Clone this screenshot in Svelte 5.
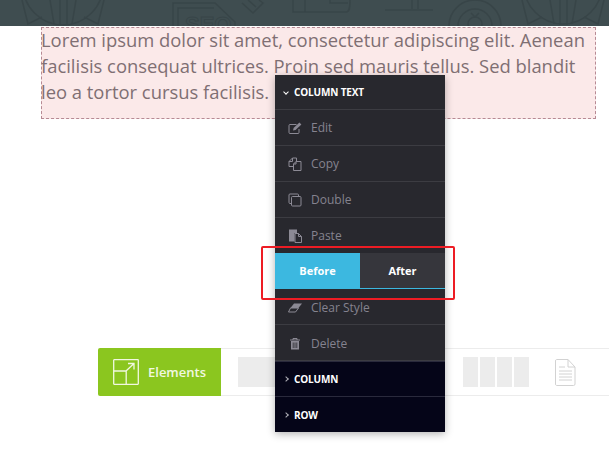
<script>
  const actions = [
    { label: 'Edit', icon: 'edit' },
    { label: 'Copy', icon: 'copy' },
    { label: 'Double', icon: 'double' },
    { label: 'Paste', icon: 'paste' }
  ];
  const tailActions = [
    { label: 'Clear Style', icon: 'eraser' },
    { label: 'Delete', icon: 'trash' }
  ];
  let position = $state('before');
</script>

{#snippet icon(name)}
  <svg class="row-icon" viewBox="0 0 14 14" width="14" height="14" fill="none" stroke="currentColor" stroke-width="1">
    {#if name === 'edit'}
      <path d="M11 8v3.500a1 1 0 0 1-1 1H2a1 1 0 0 1-1-1v-7a1 1 0 0 1 1-1h6.500" />
      <path d="M5 9.500l.6-2.500L11.400 1.500l2 2L7.500 9z" fill="currentColor" stroke="none" />
    {:else if name === 'copy'}
      <path d="M4.500 1h4v3.500M4.500 1L1 4.500v5h4.500" />
      <path d="M4.500 1v3.500H1" />
      <path d="M8 4.500h5v9H5.500V7z" />
      <path d="M8 4.500V7H5.500" />
    {:else if name === 'double'}
      <path d="M3.500 10.500H2a1 1 0 0 1-1-1V2a1 1 0 0 1 1-1h7.500a1 1 0 0 1 1 1v1.500" />
      <rect x="3.500" y="3.500" width="9.500" height="9.500" rx="1" />
    {:else if name === 'paste'}
      <path d="M1 .5h8v3.500H6.500v8.500H1z" fill="currentColor" stroke="none" />
      <path d="M7 4.500h3.500l3 3V13.500H7z" />
      <path d="M10.500 4.500v3h3" />
    {:else if name === 'eraser'}
      <path d="M6 2.500h8L10.500 7H2.500z" fill="currentColor" stroke="none" />
      <path d="M2.500 7h8L7.500 11H.5z" />
    {:else}
      <path d="M2 3h10M5 3V1.500h4V3" />
      <path d="M3 4h8v8.500H3z" fill="currentColor" stroke="none" />
      <path d="M5.200 5.500v5.500M7 5.500v5.500M8.800 5.500v5.500" stroke="#28282e" stroke-width=".8" />
    {/if}
  </svg>
{/snippet}

<header class="banner">
  <!-- faint outline pattern -->
  <svg class="pattern" width="609" height="26" viewBox="0 0 609 26" fill="none" stroke="#384548" stroke-width="1.500">
    <!-- left badge -->
    <circle cx="63" cy="-15" r="40" />
    <path d="M22 0l6 24 14-7M104 0l-6 24-14-7M50 0l4 24M76 0l-4 24M60 0v25M67 0v25" />
    <!-- seo tag -->
    <path d="M173 26V3h42l20 19v4M178 26V8h36" />
    <text x="185" y="32" class="seo">SEO</text>
    <path d="M242 3l11 10 10-10-4-3M248 0l8 7" />
    <!-- bars -->
    <path d="M293 0v12h12V0M305 12h41c4 0 4-6 4-12M330 0v3h18" />
    <path d="M385 10h48M412 0v9M418 0v9" />
    <!-- gear -->
    <circle cx="475" cy="26" r="26" />
    <circle cx="475" cy="26" r="17" />
    <circle cx="475" cy="24" r="7" />
    <path d="M471 13l4 4 4-4" />
    <!-- right badge -->
    <circle cx="563" cy="-15" r="39" />
    <path d="M522 0l6 24 14-7M604 0l-6 24-14-7M550 0l4 24M576 0l-4 24M560 0v25M567 0v25" />
  </svg>
</header>

<main class="canvas">
  <section class="selected">
    <p>Lorem ipsum dolor sit amet, consectetur adipiscing elit. Aenean facilisis consequat ultrices. Proin sed mauris tellus. Sed blandit leo a tortor cursus facilisis.</p>
  </section>

  <div class="toolbar">
    <button class="elements">
      <svg viewBox="0 0 26 26" width="26" height="26" fill="none" stroke="currentColor" stroke-width="1.300">
        <rect x=".7" y=".7" width="24.600" height="24.600" rx=".5" />
        <path d="M.7 12h12.500v13.300M13 12L21 4.500M15 4.500h6v6" />
      </svg>
      <span>Elements</span>
    </button>
    <div class="blocks">
      <div class="block wide"></div>
      <div class="quad">
        <div class="block"></div>
        <div class="block"></div>
        <div class="block"></div>
        <div class="block"></div>
      </div>
      <svg class="doc" viewBox="0 0 21 27" width="21" height="27" fill="none" stroke="#d2d2d2" stroke-width="1">
        <path d="M1.500.5h11.500l7 7.500v17a1.500 1.500 0 0 1-1.500 1.500h-17A1.500 1.500 0 0 1 .5 25V2A1.500 1.500 0 0 1 1.500.5z" />
        <path d="M13 .5V8h7M4 8h6M4 12h13M4 15h13M4 18h13M4 21h13" />
      </svg>
    </div>
  </div>
</main>

<aside class="menu">
  <div class="head"><span class="chev down"></span>COLUMN TEXT</div>
  {#each actions as a}
    <div class="row">{@render icon(a.icon)}<span>{a.label}</span></div>
  {/each}
  <div class="switch">
    <button class:active={position === 'before'} onclick={() => (position = 'before')}>Before</button>
    <button class:active={position === 'after'} onclick={() => (position = 'after')}>After</button>
  </div>
  {#each tailActions as a}
    <div class="row tail">{@render icon(a.icon)}<span>{a.label}</span></div>
  {/each}
  <div class="dark"><span class="chev"></span>COLUMN</div>
  <div class="dark last"><span class="chev"></span>ROW</div>
</aside>

<div class="highlight"></div>

<style>
  :global(body) {
    margin: 0;
    background: #fff;
    font-family: "Open Sans", "Noto Sans", sans-serif;
    overflow: hidden;
  }

  .banner {
    height: 26px;
    background: #3f4d50;
    overflow: hidden;
  }

  .pattern {
    display: block;
  }

  .seo {
    font-family: "Liberation Sans", sans-serif;
    font-size: 22px;
    font-weight: 700;
    fill: none;
    stroke: #384548;
    stroke-width: 1;
  }

  .canvas {
    padding: 1px 13px 0 41px;
  }

  .selected {
    height: 90px;
    background: #fbe9e9;
    border: 1px dashed #b78a94;
  }

  .selected p {
    margin: -1px 0 0 -1px;
    font-family: "Open Sans", sans-serif;
    font-size: 18.400px;
    line-height: 26px;
    color: #7f6f73;
  }

  .toolbar {
    display: flex;
    margin: 229px -13px 0 57px;
    height: 48px;
  }

  .elements {
    width: 123px;
    height: 48px;
    display: flex;
    align-items: center;
    gap: 9px;
    padding: 0 0 0 15px;
    border: 0;
    border-radius: 2px 0 0 2px;
    background: #8bc61f;
    color: #f1f8e0;
    font: 600 13px "Open Sans", sans-serif;
  }

  .blocks {
    flex: 1;
    display: flex;
    align-items: center;
    padding-left: 17px;
    border-top: 1px solid #ececec;
    border-bottom: 1px solid #ececec;
    height: 46px;
  }

  .block {
    height: 30px;
    width: 15px;
    background: #ececec;
  }

  .block.wide {
    width: 200px;
  }

  .quad {
    display: flex;
    gap: 2px;
    margin-left: 25px;
  }

  .doc {
    margin-left: 26px;
  }

  .menu {
    position: absolute;
    left: 275px;
    top: 75px;
    width: 170px;
    background: #28282e;
    box-shadow: 0 2px 8px rgba(0, 0, 0, 0.3);
    font-size: 12px;
  }

  .head {
    height: 34px;
    display: flex;
    align-items: center;
    padding-left: 9px;
    border-bottom: 1px solid #3c3c42;
    color: #fff;
    font-size: 10px;
    font-weight: 700;
    letter-spacing: -0.15px;
  }

  .row {
    height: 35px;
    display: flex;
    align-items: center;
    gap: 9px;
    padding-left: 13px;
    border-bottom: 1px solid #3c3c42;
    color: #85838f;
  }

  .row.tail {
    height: 33px;
    padding-top: 2px;
  }

  .row-icon {
    color: #8c8a95;
    flex: none;
  }

  .switch {
    display: flex;
    height: 35px;
    border-bottom: 1px solid #3cb8e0;
    margin-top: -1px;
  }

  .switch button {
    flex: 1;
    border: 0;
    padding: 0;
    background: #36363c;
    color: #fff;
    font: 700 11px "Open Sans", sans-serif;
  }

  .switch button.active {
    flex: none;
    width: 85px;
    background: #3cb8e0;
  }

  .dark {
    box-sizing: border-box;
    height: 35px;
    display: flex;
    align-items: center;
    padding-left: 9px;
    background: #050518;
    border-top: 1px solid #2a2a3c;
    color: #fff;
    font-size: 10px;
    font-weight: 700;
    letter-spacing: -0.15px;
  }

  .dark.last {
    height: 36px;
  }

  .chev {
    width: 3px;
    height: 3px;
    margin-right: 6px;
    border-right: 1px solid #b0b0b8;
    border-top: 1px solid #b0b0b8;
    transform: rotate(45deg);
  }

  .chev.down {
    transform: rotate(135deg);
    border-color: #fff;
  }

  .highlight {
    position: absolute;
    left: 261px;
    top: 246px;
    width: 190px;
    height: 50px;
    border: 2px solid #ed1c24;
    border-radius: 2px;
  }
</style>
